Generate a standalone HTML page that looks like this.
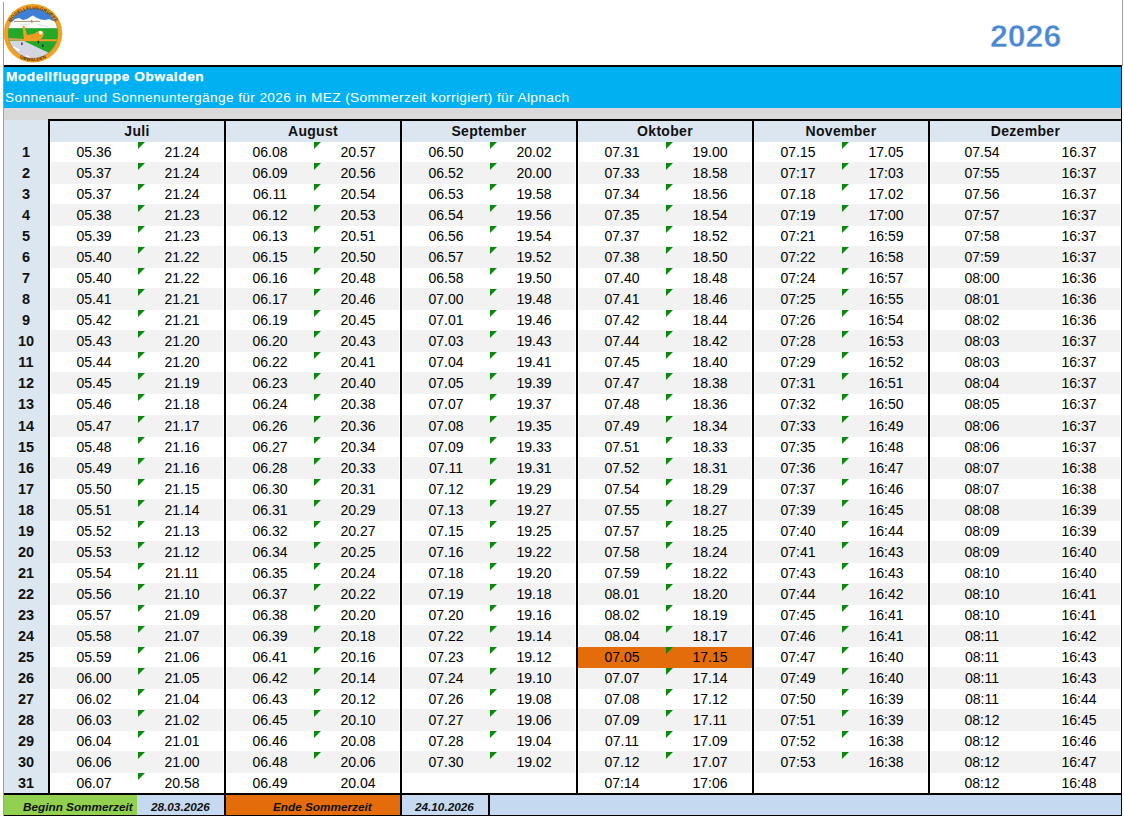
<!DOCTYPE html>
<html><head><meta charset="utf-8"><style>
html,body{margin:0;padding:0;}
body{width:1124px;height:818px;position:relative;overflow:hidden;background:#fff;font-family:"Liberation Sans",sans-serif;}
div{position:absolute;box-sizing:border-box;}
.sh{background:#f2f2f2;}
.t{width:80px;height:21px;line-height:21px;text-align:center;font-size:14px;color:#000;white-space:nowrap;}
.tri{width:0;height:0;border-top:7px solid #0a8a0a;border-right:7px solid transparent;}
.d{left:4px;width:44px;height:21px;line-height:21px;text-align:center;font-size:14.5px;font-weight:bold;color:#111;}
.mh{top:121px;height:21px;line-height:21px;text-align:center;font-size:14px;letter-spacing:0.3px;font-weight:bold;color:#111;}
.bk{background:#000;}
.ft{font-size:11.75px;font-weight:bold;font-style:italic;color:#111;white-space:nowrap;line-height:20px;height:20px;}
</style></head><body>
<div style="left:3px;top:2px;width:1px;height:814px;background:#a0a0a0"></div>
<div style="left:1122px;top:0;width:1px;height:66px;background:#a0a0a0"></div>
<svg style="position:absolute;left:0;top:0" width="68" height="68" viewBox="0 0 68 68">
<defs><clipPath id="ic"><circle cx="33" cy="33.3" r="25"/></clipPath></defs>
<circle cx="33" cy="33.3" r="29.3" fill="#f3a020"/>
<g clip-path="url(#ic)">
<rect x="0" y="0" width="68" height="68" fill="#3e80d3"/>
<path d="M0 23 L12 22 L15 19 L19 18 L23 20 L27 19 L31 16.5 L33 15.5 L36 17.5 L41 19.5 L45 20 L49 19 L53 21 L68 22 L68 28.5 L0 28.5 Z" fill="#fbfbf8"/>
<path d="M14 21.4 L40 21.4" stroke="#9a7a5a" stroke-width="0.8"/>
<path d="M31.5 20 l0.5 3" stroke="#9a7a5a" stroke-width="0.9"/>
<path d="M20 25 L30 24 M38 24.5 L48 27" stroke="#c8ccd8" stroke-width="0.6"/>
<rect x="0" y="28.3" width="68" height="40" fill="#23a828"/>
<path d="M0 40.5 L24 41 L48 52.5 L52 68 L0 68 Z" fill="#d4d6e2"/>
<path d="M13.5 47 L19.5 50.5" stroke="#ffffff" stroke-width="2"/>
<path d="M25.5 55.8 L30 58" stroke="#ffffff" stroke-width="2"/>
<path d="M0 37.6 L30 39.2 L68 39.2 L68 41.2 L30 41.2 L0 39.8 Z" fill="#eea021"/>
<path d="M8 39.2 L22 40" stroke="#b8a890" stroke-width="1"/>
<path d="M22.5 26 L24.5 26 L27 35 L33 34 L39 31 L43 31.5 L44 35 L41 39 L33 41 L24 40.5 Z" fill="#f0a025"/>
<path d="M30 36 L41 33 M31 38 L41 35.5" stroke="#d88a18" stroke-width="0.6"/>
<circle cx="40.6" cy="32.6" r="1.9" fill="#ffffff"/>
<path d="M21.9 42.5 l0 2.5 M38.4 40.8 l0 2.4 M42.8 44.5 l0 2.5" stroke="#222" stroke-width="1.3"/>
</g>
<circle cx="33" cy="33.3" r="25" fill="none" stroke="#b88a40" stroke-width="0.5"/>
<path id="arcT" d="M7.2 35 A25.8 25.8 0 0 1 58.8 35" fill="none"/>
<text font-family="Liberation Sans" font-weight="bold" font-size="4.6" fill="#4a3010" letter-spacing="0.15"><textPath href="#arcT" startOffset="50%" text-anchor="middle">MODELLFLUGGRUPPE</textPath></text>
<path id="arcB" d="M8.8 47.3 A28 28 0 0 0 57.2 47.3" fill="none"/>
<text font-family="Liberation Sans" font-weight="bold" font-size="4.5" fill="#4a3010" letter-spacing="0.2"><textPath href="#arcB" startOffset="50%" text-anchor="middle">OBWALDEN</textPath></text>
</svg>
<div style="left:990px;top:16px;font-size:32px;font-weight:bold;color:#4a88d0;-webkit-text-stroke:0.45px #fff;line-height:40px">2026</div>
<div style="left:4px;top:65px;width:1118px;height:2px;background:#000"></div>
<div style="left:4px;top:67px;width:1117px;height:41px;background:#00b0f0"></div>
<div style="left:1121px;top:65px;width:1px;height:751px;background:#000"></div>
<div style="left:6px;top:67px;font-size:13.6px;letter-spacing:0.62px;font-weight:bold;color:#fff;-webkit-text-stroke:0.25px #fff;line-height:20px;white-space:nowrap">Modellfluggruppe Obwalden</div>
<div style="left:5px;top:88px;font-size:13.7px;letter-spacing:0.365px;color:#fff;line-height:20px;white-space:nowrap">Sonnenauf- und Sonnenuntergänge für 2026 in MEZ (Sommerzeit korrigiert) für Alpnach</div>
<div style="left:4px;top:108px;width:1117px;height:12px;background:#d9d9d9"></div>
<div style="left:4px;top:120px;width:44px;height:675px;background:#dce6f1"></div>
<div style="left:50px;top:121px;width:1071px;height:21px;background:#dce6f1"></div>
<div style="left:48px;top:119px;width:1073px;height:2px;background:#000"></div>
<div class="sh" style="left:51px;top:162px;width:172px;height:22px"></div>
<div class="sh" style="left:227px;top:162px;width:172px;height:22px"></div>
<div class="sh" style="left:403px;top:162px;width:172px;height:22px"></div>
<div class="sh" style="left:579px;top:162px;width:172px;height:22px"></div>
<div class="sh" style="left:755px;top:162px;width:172px;height:22px"></div>
<div class="sh" style="left:931px;top:162px;width:189px;height:22px"></div>
<div class="sh" style="left:51px;top:204px;width:172px;height:22px"></div>
<div class="sh" style="left:227px;top:204px;width:172px;height:22px"></div>
<div class="sh" style="left:403px;top:204px;width:172px;height:22px"></div>
<div class="sh" style="left:579px;top:204px;width:172px;height:22px"></div>
<div class="sh" style="left:755px;top:204px;width:172px;height:22px"></div>
<div class="sh" style="left:931px;top:204px;width:189px;height:22px"></div>
<div class="sh" style="left:51px;top:246px;width:172px;height:22px"></div>
<div class="sh" style="left:227px;top:246px;width:172px;height:22px"></div>
<div class="sh" style="left:403px;top:246px;width:172px;height:22px"></div>
<div class="sh" style="left:579px;top:246px;width:172px;height:22px"></div>
<div class="sh" style="left:755px;top:246px;width:172px;height:22px"></div>
<div class="sh" style="left:931px;top:246px;width:189px;height:22px"></div>
<div class="sh" style="left:51px;top:288px;width:172px;height:22px"></div>
<div class="sh" style="left:227px;top:288px;width:172px;height:22px"></div>
<div class="sh" style="left:403px;top:288px;width:172px;height:22px"></div>
<div class="sh" style="left:579px;top:288px;width:172px;height:22px"></div>
<div class="sh" style="left:755px;top:288px;width:172px;height:22px"></div>
<div class="sh" style="left:931px;top:288px;width:189px;height:22px"></div>
<div class="sh" style="left:51px;top:330px;width:172px;height:22px"></div>
<div class="sh" style="left:227px;top:330px;width:172px;height:22px"></div>
<div class="sh" style="left:403px;top:330px;width:172px;height:22px"></div>
<div class="sh" style="left:579px;top:330px;width:172px;height:22px"></div>
<div class="sh" style="left:755px;top:330px;width:172px;height:22px"></div>
<div class="sh" style="left:931px;top:330px;width:189px;height:22px"></div>
<div class="sh" style="left:51px;top:372px;width:172px;height:22px"></div>
<div class="sh" style="left:227px;top:372px;width:172px;height:22px"></div>
<div class="sh" style="left:403px;top:372px;width:172px;height:22px"></div>
<div class="sh" style="left:579px;top:372px;width:172px;height:22px"></div>
<div class="sh" style="left:755px;top:372px;width:172px;height:22px"></div>
<div class="sh" style="left:931px;top:372px;width:189px;height:22px"></div>
<div class="sh" style="left:51px;top:415px;width:172px;height:22px"></div>
<div class="sh" style="left:227px;top:415px;width:172px;height:22px"></div>
<div class="sh" style="left:403px;top:415px;width:172px;height:22px"></div>
<div class="sh" style="left:579px;top:415px;width:172px;height:22px"></div>
<div class="sh" style="left:755px;top:415px;width:172px;height:22px"></div>
<div class="sh" style="left:931px;top:415px;width:189px;height:22px"></div>
<div class="sh" style="left:51px;top:457px;width:172px;height:22px"></div>
<div class="sh" style="left:227px;top:457px;width:172px;height:22px"></div>
<div class="sh" style="left:403px;top:457px;width:172px;height:22px"></div>
<div class="sh" style="left:579px;top:457px;width:172px;height:22px"></div>
<div class="sh" style="left:755px;top:457px;width:172px;height:22px"></div>
<div class="sh" style="left:931px;top:457px;width:189px;height:22px"></div>
<div class="sh" style="left:51px;top:499px;width:172px;height:22px"></div>
<div class="sh" style="left:227px;top:499px;width:172px;height:22px"></div>
<div class="sh" style="left:403px;top:499px;width:172px;height:22px"></div>
<div class="sh" style="left:579px;top:499px;width:172px;height:22px"></div>
<div class="sh" style="left:755px;top:499px;width:172px;height:22px"></div>
<div class="sh" style="left:931px;top:499px;width:189px;height:22px"></div>
<div class="sh" style="left:51px;top:541px;width:172px;height:22px"></div>
<div class="sh" style="left:227px;top:541px;width:172px;height:22px"></div>
<div class="sh" style="left:403px;top:541px;width:172px;height:22px"></div>
<div class="sh" style="left:579px;top:541px;width:172px;height:22px"></div>
<div class="sh" style="left:755px;top:541px;width:172px;height:22px"></div>
<div class="sh" style="left:931px;top:541px;width:189px;height:22px"></div>
<div class="sh" style="left:51px;top:583px;width:172px;height:22px"></div>
<div class="sh" style="left:227px;top:583px;width:172px;height:22px"></div>
<div class="sh" style="left:403px;top:583px;width:172px;height:22px"></div>
<div class="sh" style="left:579px;top:583px;width:172px;height:22px"></div>
<div class="sh" style="left:755px;top:583px;width:172px;height:22px"></div>
<div class="sh" style="left:931px;top:583px;width:189px;height:22px"></div>
<div class="sh" style="left:51px;top:625px;width:172px;height:22px"></div>
<div class="sh" style="left:227px;top:625px;width:172px;height:22px"></div>
<div class="sh" style="left:403px;top:625px;width:172px;height:22px"></div>
<div class="sh" style="left:579px;top:625px;width:172px;height:22px"></div>
<div class="sh" style="left:755px;top:625px;width:172px;height:22px"></div>
<div class="sh" style="left:931px;top:625px;width:189px;height:22px"></div>
<div class="sh" style="left:51px;top:667px;width:172px;height:22px"></div>
<div class="sh" style="left:227px;top:667px;width:172px;height:22px"></div>
<div class="sh" style="left:403px;top:667px;width:172px;height:22px"></div>
<div class="sh" style="left:579px;top:667px;width:172px;height:22px"></div>
<div class="sh" style="left:755px;top:667px;width:172px;height:22px"></div>
<div class="sh" style="left:931px;top:667px;width:189px;height:22px"></div>
<div class="sh" style="left:51px;top:709px;width:172px;height:22px"></div>
<div class="sh" style="left:227px;top:709px;width:172px;height:22px"></div>
<div class="sh" style="left:403px;top:709px;width:172px;height:22px"></div>
<div class="sh" style="left:579px;top:709px;width:172px;height:22px"></div>
<div class="sh" style="left:755px;top:709px;width:172px;height:22px"></div>
<div class="sh" style="left:931px;top:709px;width:189px;height:22px"></div>
<div class="sh" style="left:51px;top:751px;width:172px;height:22px"></div>
<div class="sh" style="left:227px;top:751px;width:172px;height:22px"></div>
<div class="sh" style="left:403px;top:751px;width:172px;height:22px"></div>
<div class="sh" style="left:579px;top:751px;width:172px;height:22px"></div>
<div class="sh" style="left:755px;top:751px;width:172px;height:22px"></div>
<div class="sh" style="left:931px;top:751px;width:189px;height:22px"></div>
<div style="position:absolute;left:578px;top:647px;width:174px;height:21px;background:#e46c0a"></div>
<div class="t" style="left:54px;top:142px">05.36</div>
<div class="t" style="left:142px;top:142px">21.24</div>
<div class="tri" style="left:138px;top:142px"></div>
<div class="t" style="left:54px;top:163px">05.37</div>
<div class="t" style="left:142px;top:163px">21.24</div>
<div class="tri" style="left:138px;top:163px"></div>
<div class="t" style="left:54px;top:184px">05.37</div>
<div class="t" style="left:142px;top:184px">21.24</div>
<div class="tri" style="left:138px;top:184px"></div>
<div class="t" style="left:54px;top:205px">05.38</div>
<div class="t" style="left:142px;top:205px">21.23</div>
<div class="tri" style="left:138px;top:205px"></div>
<div class="t" style="left:54px;top:226px">05.39</div>
<div class="t" style="left:142px;top:226px">21.23</div>
<div class="tri" style="left:138px;top:226px"></div>
<div class="t" style="left:54px;top:247px">05.40</div>
<div class="t" style="left:142px;top:247px">21.22</div>
<div class="tri" style="left:138px;top:247px"></div>
<div class="t" style="left:54px;top:268px">05.40</div>
<div class="t" style="left:142px;top:268px">21.22</div>
<div class="tri" style="left:138px;top:268px"></div>
<div class="t" style="left:54px;top:289px">05.41</div>
<div class="t" style="left:142px;top:289px">21.21</div>
<div class="tri" style="left:138px;top:289px"></div>
<div class="t" style="left:54px;top:310px">05.42</div>
<div class="t" style="left:142px;top:310px">21.21</div>
<div class="tri" style="left:138px;top:310px"></div>
<div class="t" style="left:54px;top:331px">05.43</div>
<div class="t" style="left:142px;top:331px">21.20</div>
<div class="tri" style="left:138px;top:331px"></div>
<div class="t" style="left:54px;top:352px">05.44</div>
<div class="t" style="left:142px;top:352px">21.20</div>
<div class="tri" style="left:138px;top:352px"></div>
<div class="t" style="left:54px;top:373px">05.45</div>
<div class="t" style="left:142px;top:373px">21.19</div>
<div class="tri" style="left:138px;top:373px"></div>
<div class="t" style="left:54px;top:394px">05.46</div>
<div class="t" style="left:142px;top:394px">21.18</div>
<div class="tri" style="left:138px;top:394px"></div>
<div class="t" style="left:54px;top:416px">05.47</div>
<div class="t" style="left:142px;top:416px">21.17</div>
<div class="tri" style="left:138px;top:416px"></div>
<div class="t" style="left:54px;top:437px">05.48</div>
<div class="t" style="left:142px;top:437px">21.16</div>
<div class="tri" style="left:138px;top:437px"></div>
<div class="t" style="left:54px;top:458px">05.49</div>
<div class="t" style="left:142px;top:458px">21.16</div>
<div class="tri" style="left:138px;top:458px"></div>
<div class="t" style="left:54px;top:479px">05.50</div>
<div class="t" style="left:142px;top:479px">21.15</div>
<div class="tri" style="left:138px;top:479px"></div>
<div class="t" style="left:54px;top:500px">05.51</div>
<div class="t" style="left:142px;top:500px">21.14</div>
<div class="tri" style="left:138px;top:500px"></div>
<div class="t" style="left:54px;top:521px">05.52</div>
<div class="t" style="left:142px;top:521px">21.13</div>
<div class="tri" style="left:138px;top:521px"></div>
<div class="t" style="left:54px;top:542px">05.53</div>
<div class="t" style="left:142px;top:542px">21.12</div>
<div class="tri" style="left:138px;top:542px"></div>
<div class="t" style="left:54px;top:563px">05.54</div>
<div class="t" style="left:142px;top:563px">21.11</div>
<div class="tri" style="left:138px;top:563px"></div>
<div class="t" style="left:54px;top:584px">05.56</div>
<div class="t" style="left:142px;top:584px">21.10</div>
<div class="tri" style="left:138px;top:584px"></div>
<div class="t" style="left:54px;top:605px">05.57</div>
<div class="t" style="left:142px;top:605px">21.09</div>
<div class="tri" style="left:138px;top:605px"></div>
<div class="t" style="left:54px;top:626px">05.58</div>
<div class="t" style="left:142px;top:626px">21.07</div>
<div class="tri" style="left:138px;top:626px"></div>
<div class="t" style="left:54px;top:647px">05.59</div>
<div class="t" style="left:142px;top:647px">21.06</div>
<div class="tri" style="left:138px;top:647px"></div>
<div class="t" style="left:54px;top:668px">06.00</div>
<div class="t" style="left:142px;top:668px">21.05</div>
<div class="tri" style="left:138px;top:668px"></div>
<div class="t" style="left:54px;top:689px">06.02</div>
<div class="t" style="left:142px;top:689px">21.04</div>
<div class="tri" style="left:138px;top:689px"></div>
<div class="t" style="left:54px;top:710px">06.03</div>
<div class="t" style="left:142px;top:710px">21.02</div>
<div class="tri" style="left:138px;top:710px"></div>
<div class="t" style="left:54px;top:731px">06.04</div>
<div class="t" style="left:142px;top:731px">21.01</div>
<div class="tri" style="left:138px;top:731px"></div>
<div class="t" style="left:54px;top:752px">06.06</div>
<div class="t" style="left:142px;top:752px">21.00</div>
<div class="tri" style="left:138px;top:752px"></div>
<div class="t" style="left:54px;top:773px">06.07</div>
<div class="t" style="left:142px;top:773px">20.58</div>
<div class="tri" style="left:138px;top:773px"></div>
<div class="t" style="left:230px;top:142px">06.08</div>
<div class="t" style="left:318px;top:142px">20.57</div>
<div class="tri" style="left:314px;top:142px"></div>
<div class="t" style="left:230px;top:163px">06.09</div>
<div class="t" style="left:318px;top:163px">20.56</div>
<div class="tri" style="left:314px;top:163px"></div>
<div class="t" style="left:230px;top:184px">06.11</div>
<div class="t" style="left:318px;top:184px">20.54</div>
<div class="tri" style="left:314px;top:184px"></div>
<div class="t" style="left:230px;top:205px">06.12</div>
<div class="t" style="left:318px;top:205px">20.53</div>
<div class="tri" style="left:314px;top:205px"></div>
<div class="t" style="left:230px;top:226px">06.13</div>
<div class="t" style="left:318px;top:226px">20.51</div>
<div class="tri" style="left:314px;top:226px"></div>
<div class="t" style="left:230px;top:247px">06.15</div>
<div class="t" style="left:318px;top:247px">20.50</div>
<div class="tri" style="left:314px;top:247px"></div>
<div class="t" style="left:230px;top:268px">06.16</div>
<div class="t" style="left:318px;top:268px">20.48</div>
<div class="tri" style="left:314px;top:268px"></div>
<div class="t" style="left:230px;top:289px">06.17</div>
<div class="t" style="left:318px;top:289px">20.46</div>
<div class="tri" style="left:314px;top:289px"></div>
<div class="t" style="left:230px;top:310px">06.19</div>
<div class="t" style="left:318px;top:310px">20.45</div>
<div class="tri" style="left:314px;top:310px"></div>
<div class="t" style="left:230px;top:331px">06.20</div>
<div class="t" style="left:318px;top:331px">20.43</div>
<div class="tri" style="left:314px;top:331px"></div>
<div class="t" style="left:230px;top:352px">06.22</div>
<div class="t" style="left:318px;top:352px">20.41</div>
<div class="tri" style="left:314px;top:352px"></div>
<div class="t" style="left:230px;top:373px">06.23</div>
<div class="t" style="left:318px;top:373px">20.40</div>
<div class="tri" style="left:314px;top:373px"></div>
<div class="t" style="left:230px;top:394px">06.24</div>
<div class="t" style="left:318px;top:394px">20.38</div>
<div class="tri" style="left:314px;top:394px"></div>
<div class="t" style="left:230px;top:416px">06.26</div>
<div class="t" style="left:318px;top:416px">20.36</div>
<div class="tri" style="left:314px;top:416px"></div>
<div class="t" style="left:230px;top:437px">06.27</div>
<div class="t" style="left:318px;top:437px">20.34</div>
<div class="tri" style="left:314px;top:437px"></div>
<div class="t" style="left:230px;top:458px">06.28</div>
<div class="t" style="left:318px;top:458px">20.33</div>
<div class="tri" style="left:314px;top:458px"></div>
<div class="t" style="left:230px;top:479px">06.30</div>
<div class="t" style="left:318px;top:479px">20.31</div>
<div class="tri" style="left:314px;top:479px"></div>
<div class="t" style="left:230px;top:500px">06.31</div>
<div class="t" style="left:318px;top:500px">20.29</div>
<div class="tri" style="left:314px;top:500px"></div>
<div class="t" style="left:230px;top:521px">06.32</div>
<div class="t" style="left:318px;top:521px">20.27</div>
<div class="tri" style="left:314px;top:521px"></div>
<div class="t" style="left:230px;top:542px">06.34</div>
<div class="t" style="left:318px;top:542px">20.25</div>
<div class="tri" style="left:314px;top:542px"></div>
<div class="t" style="left:230px;top:563px">06.35</div>
<div class="t" style="left:318px;top:563px">20.24</div>
<div class="tri" style="left:314px;top:563px"></div>
<div class="t" style="left:230px;top:584px">06.37</div>
<div class="t" style="left:318px;top:584px">20.22</div>
<div class="tri" style="left:314px;top:584px"></div>
<div class="t" style="left:230px;top:605px">06.38</div>
<div class="t" style="left:318px;top:605px">20.20</div>
<div class="tri" style="left:314px;top:605px"></div>
<div class="t" style="left:230px;top:626px">06.39</div>
<div class="t" style="left:318px;top:626px">20.18</div>
<div class="tri" style="left:314px;top:626px"></div>
<div class="t" style="left:230px;top:647px">06.41</div>
<div class="t" style="left:318px;top:647px">20.16</div>
<div class="tri" style="left:314px;top:647px"></div>
<div class="t" style="left:230px;top:668px">06.42</div>
<div class="t" style="left:318px;top:668px">20.14</div>
<div class="tri" style="left:314px;top:668px"></div>
<div class="t" style="left:230px;top:689px">06.43</div>
<div class="t" style="left:318px;top:689px">20.12</div>
<div class="tri" style="left:314px;top:689px"></div>
<div class="t" style="left:230px;top:710px">06.45</div>
<div class="t" style="left:318px;top:710px">20.10</div>
<div class="tri" style="left:314px;top:710px"></div>
<div class="t" style="left:230px;top:731px">06.46</div>
<div class="t" style="left:318px;top:731px">20.08</div>
<div class="tri" style="left:314px;top:731px"></div>
<div class="t" style="left:230px;top:752px">06.48</div>
<div class="t" style="left:318px;top:752px">20.06</div>
<div class="tri" style="left:314px;top:752px"></div>
<div class="t" style="left:230px;top:773px">06.49</div>
<div class="t" style="left:318px;top:773px">20.04</div>
<div class="t" style="left:406px;top:142px">06.50</div>
<div class="t" style="left:494px;top:142px">20.02</div>
<div class="tri" style="left:490px;top:142px"></div>
<div class="t" style="left:406px;top:163px">06.52</div>
<div class="t" style="left:494px;top:163px">20.00</div>
<div class="tri" style="left:490px;top:163px"></div>
<div class="t" style="left:406px;top:184px">06.53</div>
<div class="t" style="left:494px;top:184px">19.58</div>
<div class="tri" style="left:490px;top:184px"></div>
<div class="t" style="left:406px;top:205px">06.54</div>
<div class="t" style="left:494px;top:205px">19.56</div>
<div class="tri" style="left:490px;top:205px"></div>
<div class="t" style="left:406px;top:226px">06.56</div>
<div class="t" style="left:494px;top:226px">19.54</div>
<div class="tri" style="left:490px;top:226px"></div>
<div class="t" style="left:406px;top:247px">06.57</div>
<div class="t" style="left:494px;top:247px">19.52</div>
<div class="tri" style="left:490px;top:247px"></div>
<div class="t" style="left:406px;top:268px">06.58</div>
<div class="t" style="left:494px;top:268px">19.50</div>
<div class="tri" style="left:490px;top:268px"></div>
<div class="t" style="left:406px;top:289px">07.00</div>
<div class="t" style="left:494px;top:289px">19.48</div>
<div class="tri" style="left:490px;top:289px"></div>
<div class="t" style="left:406px;top:310px">07.01</div>
<div class="t" style="left:494px;top:310px">19.46</div>
<div class="tri" style="left:490px;top:310px"></div>
<div class="t" style="left:406px;top:331px">07.03</div>
<div class="t" style="left:494px;top:331px">19.43</div>
<div class="tri" style="left:490px;top:331px"></div>
<div class="t" style="left:406px;top:352px">07.04</div>
<div class="t" style="left:494px;top:352px">19.41</div>
<div class="tri" style="left:490px;top:352px"></div>
<div class="t" style="left:406px;top:373px">07.05</div>
<div class="t" style="left:494px;top:373px">19.39</div>
<div class="tri" style="left:490px;top:373px"></div>
<div class="t" style="left:406px;top:394px">07.07</div>
<div class="t" style="left:494px;top:394px">19.37</div>
<div class="tri" style="left:490px;top:394px"></div>
<div class="t" style="left:406px;top:416px">07.08</div>
<div class="t" style="left:494px;top:416px">19.35</div>
<div class="tri" style="left:490px;top:416px"></div>
<div class="t" style="left:406px;top:437px">07.09</div>
<div class="t" style="left:494px;top:437px">19.33</div>
<div class="tri" style="left:490px;top:437px"></div>
<div class="t" style="left:406px;top:458px">07.11</div>
<div class="t" style="left:494px;top:458px">19.31</div>
<div class="tri" style="left:490px;top:458px"></div>
<div class="t" style="left:406px;top:479px">07.12</div>
<div class="t" style="left:494px;top:479px">19.29</div>
<div class="tri" style="left:490px;top:479px"></div>
<div class="t" style="left:406px;top:500px">07.13</div>
<div class="t" style="left:494px;top:500px">19.27</div>
<div class="tri" style="left:490px;top:500px"></div>
<div class="t" style="left:406px;top:521px">07.15</div>
<div class="t" style="left:494px;top:521px">19.25</div>
<div class="tri" style="left:490px;top:521px"></div>
<div class="t" style="left:406px;top:542px">07.16</div>
<div class="t" style="left:494px;top:542px">19.22</div>
<div class="tri" style="left:490px;top:542px"></div>
<div class="t" style="left:406px;top:563px">07.18</div>
<div class="t" style="left:494px;top:563px">19.20</div>
<div class="tri" style="left:490px;top:563px"></div>
<div class="t" style="left:406px;top:584px">07.19</div>
<div class="t" style="left:494px;top:584px">19.18</div>
<div class="tri" style="left:490px;top:584px"></div>
<div class="t" style="left:406px;top:605px">07.20</div>
<div class="t" style="left:494px;top:605px">19.16</div>
<div class="tri" style="left:490px;top:605px"></div>
<div class="t" style="left:406px;top:626px">07.22</div>
<div class="t" style="left:494px;top:626px">19.14</div>
<div class="tri" style="left:490px;top:626px"></div>
<div class="t" style="left:406px;top:647px">07.23</div>
<div class="t" style="left:494px;top:647px">19.12</div>
<div class="tri" style="left:490px;top:647px"></div>
<div class="t" style="left:406px;top:668px">07.24</div>
<div class="t" style="left:494px;top:668px">19.10</div>
<div class="tri" style="left:490px;top:668px"></div>
<div class="t" style="left:406px;top:689px">07.26</div>
<div class="t" style="left:494px;top:689px">19.08</div>
<div class="tri" style="left:490px;top:689px"></div>
<div class="t" style="left:406px;top:710px">07.27</div>
<div class="t" style="left:494px;top:710px">19.06</div>
<div class="tri" style="left:490px;top:710px"></div>
<div class="t" style="left:406px;top:731px">07.28</div>
<div class="t" style="left:494px;top:731px">19.04</div>
<div class="tri" style="left:490px;top:731px"></div>
<div class="t" style="left:406px;top:752px">07.30</div>
<div class="t" style="left:494px;top:752px">19.02</div>
<div class="tri" style="left:490px;top:752px"></div>
<div class="t" style="left:582px;top:142px">07.31</div>
<div class="t" style="left:670px;top:142px">19.00</div>
<div class="tri" style="left:666px;top:142px"></div>
<div class="t" style="left:582px;top:163px">07.33</div>
<div class="t" style="left:670px;top:163px">18.58</div>
<div class="tri" style="left:666px;top:163px"></div>
<div class="t" style="left:582px;top:184px">07.34</div>
<div class="t" style="left:670px;top:184px">18.56</div>
<div class="tri" style="left:666px;top:184px"></div>
<div class="t" style="left:582px;top:205px">07.35</div>
<div class="t" style="left:670px;top:205px">18.54</div>
<div class="tri" style="left:666px;top:205px"></div>
<div class="t" style="left:582px;top:226px">07.37</div>
<div class="t" style="left:670px;top:226px">18.52</div>
<div class="tri" style="left:666px;top:226px"></div>
<div class="t" style="left:582px;top:247px">07.38</div>
<div class="t" style="left:670px;top:247px">18.50</div>
<div class="tri" style="left:666px;top:247px"></div>
<div class="t" style="left:582px;top:268px">07.40</div>
<div class="t" style="left:670px;top:268px">18.48</div>
<div class="tri" style="left:666px;top:268px"></div>
<div class="t" style="left:582px;top:289px">07.41</div>
<div class="t" style="left:670px;top:289px">18.46</div>
<div class="tri" style="left:666px;top:289px"></div>
<div class="t" style="left:582px;top:310px">07.42</div>
<div class="t" style="left:670px;top:310px">18.44</div>
<div class="tri" style="left:666px;top:310px"></div>
<div class="t" style="left:582px;top:331px">07.44</div>
<div class="t" style="left:670px;top:331px">18.42</div>
<div class="tri" style="left:666px;top:331px"></div>
<div class="t" style="left:582px;top:352px">07.45</div>
<div class="t" style="left:670px;top:352px">18.40</div>
<div class="tri" style="left:666px;top:352px"></div>
<div class="t" style="left:582px;top:373px">07.47</div>
<div class="t" style="left:670px;top:373px">18.38</div>
<div class="tri" style="left:666px;top:373px"></div>
<div class="t" style="left:582px;top:394px">07.48</div>
<div class="t" style="left:670px;top:394px">18.36</div>
<div class="tri" style="left:666px;top:394px"></div>
<div class="t" style="left:582px;top:416px">07.49</div>
<div class="t" style="left:670px;top:416px">18.34</div>
<div class="tri" style="left:666px;top:416px"></div>
<div class="t" style="left:582px;top:437px">07.51</div>
<div class="t" style="left:670px;top:437px">18.33</div>
<div class="tri" style="left:666px;top:437px"></div>
<div class="t" style="left:582px;top:458px">07.52</div>
<div class="t" style="left:670px;top:458px">18.31</div>
<div class="tri" style="left:666px;top:458px"></div>
<div class="t" style="left:582px;top:479px">07.54</div>
<div class="t" style="left:670px;top:479px">18.29</div>
<div class="tri" style="left:666px;top:479px"></div>
<div class="t" style="left:582px;top:500px">07.55</div>
<div class="t" style="left:670px;top:500px">18.27</div>
<div class="tri" style="left:666px;top:500px"></div>
<div class="t" style="left:582px;top:521px">07.57</div>
<div class="t" style="left:670px;top:521px">18.25</div>
<div class="tri" style="left:666px;top:521px"></div>
<div class="t" style="left:582px;top:542px">07.58</div>
<div class="t" style="left:670px;top:542px">18.24</div>
<div class="tri" style="left:666px;top:542px"></div>
<div class="t" style="left:582px;top:563px">07.59</div>
<div class="t" style="left:670px;top:563px">18.22</div>
<div class="tri" style="left:666px;top:563px"></div>
<div class="t" style="left:582px;top:584px">08.01</div>
<div class="t" style="left:670px;top:584px">18.20</div>
<div class="tri" style="left:666px;top:584px"></div>
<div class="t" style="left:582px;top:605px">08.02</div>
<div class="t" style="left:670px;top:605px">18.19</div>
<div class="tri" style="left:666px;top:605px"></div>
<div class="t" style="left:582px;top:626px">08.04</div>
<div class="t" style="left:670px;top:626px">18.17</div>
<div class="tri" style="left:666px;top:626px"></div>
<div class="t" style="left:582px;top:647px">07.05</div>
<div class="t" style="left:670px;top:647px">17.15</div>
<div class="tri" style="left:666px;top:647px"></div>
<div class="t" style="left:582px;top:668px">07.07</div>
<div class="t" style="left:670px;top:668px">17.14</div>
<div class="tri" style="left:666px;top:668px"></div>
<div class="t" style="left:582px;top:689px">07.08</div>
<div class="t" style="left:670px;top:689px">17.12</div>
<div class="tri" style="left:666px;top:689px"></div>
<div class="t" style="left:582px;top:710px">07.09</div>
<div class="t" style="left:670px;top:710px">17.11</div>
<div class="tri" style="left:666px;top:710px"></div>
<div class="t" style="left:582px;top:731px">07.11</div>
<div class="t" style="left:670px;top:731px">17.09</div>
<div class="tri" style="left:666px;top:731px"></div>
<div class="t" style="left:582px;top:752px">07.12</div>
<div class="t" style="left:670px;top:752px">17.07</div>
<div class="tri" style="left:666px;top:752px"></div>
<div class="t" style="left:582px;top:773px">07:14</div>
<div class="t" style="left:670px;top:773px">17:06</div>
<div class="t" style="left:758px;top:142px">07.15</div>
<div class="t" style="left:846px;top:142px">17.05</div>
<div class="tri" style="left:842px;top:142px"></div>
<div class="t" style="left:758px;top:163px">07:17</div>
<div class="t" style="left:846px;top:163px">17:03</div>
<div class="tri" style="left:842px;top:163px"></div>
<div class="t" style="left:758px;top:184px">07.18</div>
<div class="t" style="left:846px;top:184px">17.02</div>
<div class="tri" style="left:842px;top:184px"></div>
<div class="t" style="left:758px;top:205px">07:19</div>
<div class="t" style="left:846px;top:205px">17:00</div>
<div class="tri" style="left:842px;top:205px"></div>
<div class="t" style="left:758px;top:226px">07:21</div>
<div class="t" style="left:846px;top:226px">16:59</div>
<div class="tri" style="left:842px;top:226px"></div>
<div class="t" style="left:758px;top:247px">07:22</div>
<div class="t" style="left:846px;top:247px">16:58</div>
<div class="tri" style="left:842px;top:247px"></div>
<div class="t" style="left:758px;top:268px">07:24</div>
<div class="t" style="left:846px;top:268px">16:57</div>
<div class="tri" style="left:842px;top:268px"></div>
<div class="t" style="left:758px;top:289px">07:25</div>
<div class="t" style="left:846px;top:289px">16:55</div>
<div class="tri" style="left:842px;top:289px"></div>
<div class="t" style="left:758px;top:310px">07:26</div>
<div class="t" style="left:846px;top:310px">16:54</div>
<div class="tri" style="left:842px;top:310px"></div>
<div class="t" style="left:758px;top:331px">07:28</div>
<div class="t" style="left:846px;top:331px">16:53</div>
<div class="tri" style="left:842px;top:331px"></div>
<div class="t" style="left:758px;top:352px">07:29</div>
<div class="t" style="left:846px;top:352px">16:52</div>
<div class="tri" style="left:842px;top:352px"></div>
<div class="t" style="left:758px;top:373px">07:31</div>
<div class="t" style="left:846px;top:373px">16:51</div>
<div class="tri" style="left:842px;top:373px"></div>
<div class="t" style="left:758px;top:394px">07:32</div>
<div class="t" style="left:846px;top:394px">16:50</div>
<div class="tri" style="left:842px;top:394px"></div>
<div class="t" style="left:758px;top:416px">07:33</div>
<div class="t" style="left:846px;top:416px">16:49</div>
<div class="tri" style="left:842px;top:416px"></div>
<div class="t" style="left:758px;top:437px">07:35</div>
<div class="t" style="left:846px;top:437px">16:48</div>
<div class="tri" style="left:842px;top:437px"></div>
<div class="t" style="left:758px;top:458px">07:36</div>
<div class="t" style="left:846px;top:458px">16:47</div>
<div class="tri" style="left:842px;top:458px"></div>
<div class="t" style="left:758px;top:479px">07:37</div>
<div class="t" style="left:846px;top:479px">16:46</div>
<div class="tri" style="left:842px;top:479px"></div>
<div class="t" style="left:758px;top:500px">07:39</div>
<div class="t" style="left:846px;top:500px">16:45</div>
<div class="tri" style="left:842px;top:500px"></div>
<div class="t" style="left:758px;top:521px">07:40</div>
<div class="t" style="left:846px;top:521px">16:44</div>
<div class="tri" style="left:842px;top:521px"></div>
<div class="t" style="left:758px;top:542px">07:41</div>
<div class="t" style="left:846px;top:542px">16:43</div>
<div class="tri" style="left:842px;top:542px"></div>
<div class="t" style="left:758px;top:563px">07:43</div>
<div class="t" style="left:846px;top:563px">16:43</div>
<div class="tri" style="left:842px;top:563px"></div>
<div class="t" style="left:758px;top:584px">07:44</div>
<div class="t" style="left:846px;top:584px">16:42</div>
<div class="tri" style="left:842px;top:584px"></div>
<div class="t" style="left:758px;top:605px">07:45</div>
<div class="t" style="left:846px;top:605px">16:41</div>
<div class="tri" style="left:842px;top:605px"></div>
<div class="t" style="left:758px;top:626px">07:46</div>
<div class="t" style="left:846px;top:626px">16:41</div>
<div class="tri" style="left:842px;top:626px"></div>
<div class="t" style="left:758px;top:647px">07:47</div>
<div class="t" style="left:846px;top:647px">16:40</div>
<div class="tri" style="left:842px;top:647px"></div>
<div class="t" style="left:758px;top:668px">07:49</div>
<div class="t" style="left:846px;top:668px">16:40</div>
<div class="tri" style="left:842px;top:668px"></div>
<div class="t" style="left:758px;top:689px">07:50</div>
<div class="t" style="left:846px;top:689px">16:39</div>
<div class="tri" style="left:842px;top:689px"></div>
<div class="t" style="left:758px;top:710px">07:51</div>
<div class="t" style="left:846px;top:710px">16:39</div>
<div class="tri" style="left:842px;top:710px"></div>
<div class="t" style="left:758px;top:731px">07:52</div>
<div class="t" style="left:846px;top:731px">16:38</div>
<div class="tri" style="left:842px;top:731px"></div>
<div class="t" style="left:758px;top:752px">07:53</div>
<div class="t" style="left:846px;top:752px">16:38</div>
<div class="tri" style="left:842px;top:752px"></div>
<div class="t" style="left:942px;top:142px">07.54</div>
<div class="t" style="left:1039px;top:142px">16.37</div>
<div class="t" style="left:942px;top:163px">07:55</div>
<div class="t" style="left:1039px;top:163px">16:37</div>
<div class="t" style="left:942px;top:184px">07.56</div>
<div class="t" style="left:1039px;top:184px">16.37</div>
<div class="t" style="left:942px;top:205px">07:57</div>
<div class="t" style="left:1039px;top:205px">16:37</div>
<div class="t" style="left:942px;top:226px">07:58</div>
<div class="t" style="left:1039px;top:226px">16:37</div>
<div class="t" style="left:942px;top:247px">07:59</div>
<div class="t" style="left:1039px;top:247px">16:37</div>
<div class="t" style="left:942px;top:268px">08:00</div>
<div class="t" style="left:1039px;top:268px">16:36</div>
<div class="t" style="left:942px;top:289px">08:01</div>
<div class="t" style="left:1039px;top:289px">16:36</div>
<div class="t" style="left:942px;top:310px">08:02</div>
<div class="t" style="left:1039px;top:310px">16:36</div>
<div class="t" style="left:942px;top:331px">08:03</div>
<div class="t" style="left:1039px;top:331px">16:37</div>
<div class="t" style="left:942px;top:352px">08:03</div>
<div class="t" style="left:1039px;top:352px">16:37</div>
<div class="t" style="left:942px;top:373px">08:04</div>
<div class="t" style="left:1039px;top:373px">16:37</div>
<div class="t" style="left:942px;top:394px">08:05</div>
<div class="t" style="left:1039px;top:394px">16:37</div>
<div class="t" style="left:942px;top:416px">08:06</div>
<div class="t" style="left:1039px;top:416px">16:37</div>
<div class="t" style="left:942px;top:437px">08:06</div>
<div class="t" style="left:1039px;top:437px">16:37</div>
<div class="t" style="left:942px;top:458px">08:07</div>
<div class="t" style="left:1039px;top:458px">16:38</div>
<div class="t" style="left:942px;top:479px">08:07</div>
<div class="t" style="left:1039px;top:479px">16:38</div>
<div class="t" style="left:942px;top:500px">08:08</div>
<div class="t" style="left:1039px;top:500px">16:39</div>
<div class="t" style="left:942px;top:521px">08:09</div>
<div class="t" style="left:1039px;top:521px">16:39</div>
<div class="t" style="left:942px;top:542px">08:09</div>
<div class="t" style="left:1039px;top:542px">16:40</div>
<div class="t" style="left:942px;top:563px">08:10</div>
<div class="t" style="left:1039px;top:563px">16:40</div>
<div class="t" style="left:942px;top:584px">08:10</div>
<div class="t" style="left:1039px;top:584px">16:41</div>
<div class="t" style="left:942px;top:605px">08:10</div>
<div class="t" style="left:1039px;top:605px">16:41</div>
<div class="t" style="left:942px;top:626px">08:11</div>
<div class="t" style="left:1039px;top:626px">16:42</div>
<div class="t" style="left:942px;top:647px">08:11</div>
<div class="t" style="left:1039px;top:647px">16:43</div>
<div class="t" style="left:942px;top:668px">08:11</div>
<div class="t" style="left:1039px;top:668px">16:43</div>
<div class="t" style="left:942px;top:689px">08:11</div>
<div class="t" style="left:1039px;top:689px">16:44</div>
<div class="t" style="left:942px;top:710px">08:12</div>
<div class="t" style="left:1039px;top:710px">16:45</div>
<div class="t" style="left:942px;top:731px">08:12</div>
<div class="t" style="left:1039px;top:731px">16:46</div>
<div class="t" style="left:942px;top:752px">08:12</div>
<div class="t" style="left:1039px;top:752px">16:47</div>
<div class="t" style="left:942px;top:773px">08:12</div>
<div class="t" style="left:1039px;top:773px">16:48</div>
<div class="d" style="top:142px">1</div>
<div class="d" style="top:163px">2</div>
<div class="d" style="top:184px">3</div>
<div class="d" style="top:205px">4</div>
<div class="d" style="top:226px">5</div>
<div class="d" style="top:247px">6</div>
<div class="d" style="top:268px">7</div>
<div class="d" style="top:289px">8</div>
<div class="d" style="top:310px">9</div>
<div class="d" style="top:331px">10</div>
<div class="d" style="top:352px">11</div>
<div class="d" style="top:373px">12</div>
<div class="d" style="top:394px">13</div>
<div class="d" style="top:416px">14</div>
<div class="d" style="top:437px">15</div>
<div class="d" style="top:458px">16</div>
<div class="d" style="top:479px">17</div>
<div class="d" style="top:500px">18</div>
<div class="d" style="top:521px">19</div>
<div class="d" style="top:542px">20</div>
<div class="d" style="top:563px">21</div>
<div class="d" style="top:584px">22</div>
<div class="d" style="top:605px">23</div>
<div class="d" style="top:626px">24</div>
<div class="d" style="top:647px">25</div>
<div class="d" style="top:668px">26</div>
<div class="d" style="top:689px">27</div>
<div class="d" style="top:710px">28</div>
<div class="d" style="top:731px">29</div>
<div class="d" style="top:752px">30</div>
<div class="d" style="top:773px">31</div>
<div class="mh" style="left:50px;width:174px">Juli</div>
<div class="mh" style="left:226px;width:174px">August</div>
<div class="mh" style="left:402px;width:174px">September</div>
<div class="mh" style="left:578px;width:174px">Oktober</div>
<div class="mh" style="left:754px;width:174px">November</div>
<div class="mh" style="left:930px;width:191px">Dezember</div>
<div class="bk" style="left:48px;top:119px;width:2px;height:676px"></div>
<div class="bk" style="left:224px;top:119px;width:2px;height:676px"></div>
<div class="bk" style="left:400px;top:119px;width:2px;height:676px"></div>
<div class="bk" style="left:576px;top:119px;width:2px;height:676px"></div>
<div class="bk" style="left:752px;top:119px;width:2px;height:676px"></div>
<div class="bk" style="left:928px;top:119px;width:2px;height:676px"></div>
<div style="left:4px;top:793px;width:1118px;height:2px;background:#000"></div>
<div style="left:4px;top:795px;width:133px;height:20px;background:#92d050"></div>
<div style="left:137px;top:795px;width:87px;height:20px;background:#c5d9f1"></div>
<div style="left:226px;top:795px;width:175px;height:20px;background:#e46c0a"></div>
<div style="left:402px;top:795px;width:86px;height:20px;background:#c5d9f1"></div>
<div style="left:488px;top:795px;width:2px;height:20px;background:#000"></div>
<div style="left:490px;top:795px;width:631px;height:20px;background:#c5d9f1"></div>
<div style="left:224px;top:795px;width:2px;height:20px;background:#000"></div>
<div style="left:400px;top:795px;width:2px;height:20px;background:#000"></div>
<div style="left:4px;top:815px;width:1118px;height:1px;background:#000"></div>
<div class="ft" style="left:23px;top:797px">Beginn Sommerzeit</div>
<div class="ft" style="left:151px;top:797px">28.03.2026</div>
<div class="ft" style="left:273px;top:797px">Ende Sommerzeit</div>
<div class="ft" style="left:415px;top:797px">24.10.2026</div>
</body></html>
